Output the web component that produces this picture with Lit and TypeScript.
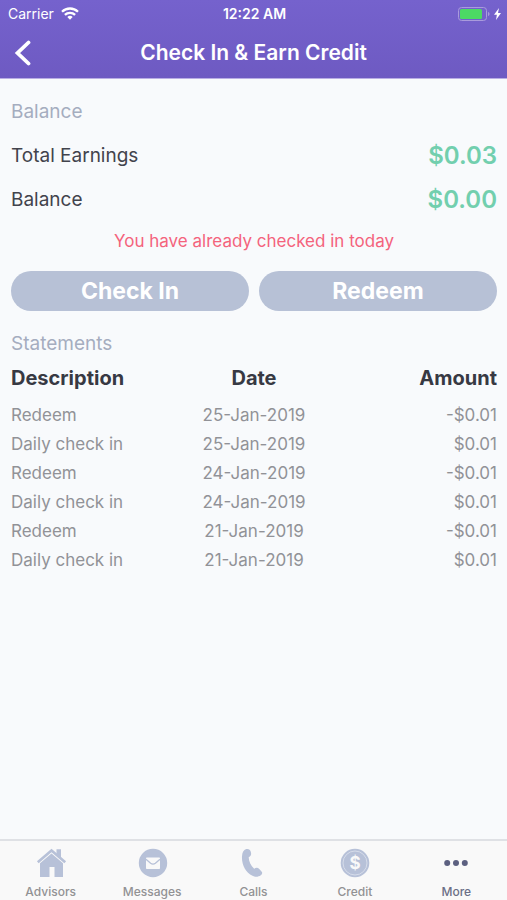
import { LitElement, html, css, svg } from "lit";
import { customElement, property } from "lit/decorators.js";

interface Statement {
  description: string;
  date: string;
  amount: string;
}

const STATEMENTS: Statement[] = [
  { description: "Redeem", date: "25-Jan-2019", amount: "-$0.01" },
  { description: "Daily check in", date: "25-Jan-2019", amount: "$0.01" },
  { description: "Redeem", date: "24-Jan-2019", amount: "-$0.01" },
  { description: "Daily check in", date: "24-Jan-2019", amount: "$0.01" },
  { description: "Redeem", date: "21-Jan-2019", amount: "-$0.01" },
  { description: "Daily check in", date: "21-Jan-2019", amount: "$0.01" },
];

const TABS = [
  {
    label: "Advisors",
    icon: svg`
      <path fill="currentColor" d="M20.500 1.200H25v9.200l-4.500-4z"/>
      <path fill="none" stroke="currentColor" stroke-width="2.600" d="M1.800 14.200 15.500 2.400l13.700 11.800"/>
      <path fill="currentColor" d="M15.500 5.400 27 15.200V29h-8.500V19h-5v10H4V15.200z"/>`,
  },
  {
    label: "Messages",
    icon: svg`
      <circle cx="16" cy="15" r="14.200" fill="currentColor"/>
      <rect x="9" y="9.500" width="14" height="11.500" rx="0.800" fill="#f9f9f9"/>
      <path fill="none" stroke="currentColor" stroke-width="1.300" d="m9 11.300 4.600 4q2.400 1.800 4.800 0l4.600-4"/>`,
  },
  {
    label: "Calls",
    icon: svg`
      <path fill="currentColor" d="M8.200 1.100c2.300-.6 3.900.3 4.500 2.400.9 2.600.5 4.700-2 5.700.2 4.400 2.100 8.300 5.500 11.500 1.800-1.300 3.700-1.100 5.300.6l2 2.100c1.200 1.400.8 2.700-.7 3.800-2.300 1.700-5.500 2-8.300.6C7.500 24.300 3.500 16.500 4 8.300 4.300 4.500 5.500 1.900 8.200 1.100z"/>`,
  },
  {
    label: "Credit",
    icon: svg`
      <circle cx="15" cy="15" r="14.300" fill="currentColor"/>
      <circle cx="15" cy="15" r="12" fill="none" stroke="#dde2ee" stroke-width="0.800"/>
      <text x="15" y="21" text-anchor="middle" font-size="17" font-weight="700" fill="#f9f9f9">$</text>`,
  },
  {
    label: "More",
    icon: svg`
      <g fill="currentColor">
        <circle cx="6.200" cy="15" r="3"/>
        <circle cx="15" cy="15" r="3"/>
        <circle cx="23.800" cy="15" r="3"/>
      </g>`,
  },
];

@customElement("status-bar")
export class StatusBar extends LitElement {
  static styles = css`
    :host {
      display: grid;
      grid-template-columns: 1fr auto 1fr;
      align-items: center;
      height: 27px;
      padding: 0 6px 0 8px;
      font-size: 14px;
    }
    .side {
      display: flex;
      align-items: center;
      gap: 7px;
    }
    .end {
      justify-content: flex-end;
      gap: 4px;
    }
    .time {
      font-weight: 600;
    }
    svg {
      display: block;
    }
  `;

  render() {
    return html`
      <div class="side">
        <span>Carrier</span>
        <svg width="18" height="13" viewBox="0 0 18 13" role="img" aria-label="Wi-Fi">
          <g fill="none" stroke="#fff" stroke-width="2.300">
            <path d="M1 4.800a11.400 11.400 0 0 1 16 0" />
            <path d="M3.900 7.900a7.200 7.200 0 0 1 10.200 0" />
          </g>
          <path fill="#fff" d="M6.300 10a3.900 3.900 0 0 1 5.400 0L9 12.800z" />
        </svg>
      </div>
      <span class="time">12:22 AM</span>
      <div class="side end">
        <svg width="32" height="14" viewBox="0 0 32 14" role="img" aria-label="Battery">
          <rect x="0.500" y="0.500" width="28" height="13" rx="3" fill="none" stroke="#a99bdc" />
          <rect x="2" y="2" width="22" height="10" rx="1.500" fill="#4cd964" />
          <path d="M30 5c2 .6 2 3.400 0 4z" fill="#a99bdc" />
        </svg>
        <svg width="7" height="12" viewBox="0 0 7 12" role="img" aria-label="Charging">
          <path fill="#fff" d="M5 0 0 6.800h2.900L2 12l5-7H4z" />
        </svg>
      </div>
    `;
  }
}

@customElement("tab-bar")
export class TabBar extends LitElement {
  @property() active = "More";

  static styles = css`
    :host {
      display: block;
      border-top: 2px solid #dfe1e5;
      background: #f9f9f9;
    }
    nav {
      display: grid;
      grid-template-columns: repeat(5, 1fr);
    }
    a {
      display: flex;
      flex-direction: column;
      align-items: center;
      gap: 6px;
      padding: 7px 0 0;
      color: #929294;
      font-size: 12px;
      font-weight: 500;
      line-height: 16px;
      text-decoration: none;
    }
    svg {
      display: block;
      color: #b7c1d8;
    }
    .active {
      color: #6b6f86;
    }
    .active svg {
      color: #5c6080;
    }
  `;

  render() {
    return html`
      <nav>
        ${TABS.map(
          (tab) => html`
            <a href="#${tab.label.toLowerCase()}" class=${tab.label === this.active ? "active" : ""}>
              <svg width="30" height="30" viewBox="0 0 30 30" overflow="visible" aria-hidden="true">${tab.icon}</svg>
              <span>${tab.label}</span>
            </a>
          `
        )}
      </nav>
    `;
  }
}

@customElement("app-root")
export class AppRoot extends LitElement {
  static styles = css`
    :host {
      display: flex;
      flex-direction: column;
      min-height: 100vh;
      background: #f8fafc;
      color: #42434c;
      font-family: Inter, "Liberation Sans", sans-serif;
    }
    header {
      background: linear-gradient(#7562cd, #6e5ac2);
      border-bottom: 1px solid #b9aee4;
      color: #fff;
    }
    .bar {
      display: grid;
      grid-template-columns: 48px 1fr 48px;
      align-items: center;
      height: 51px;
    }
    .back {
      display: flex;
      align-items: center;
      height: 40px;
      padding: 0 0 0 13px;
      border: 0;
      background: none;
      color: inherit;
    }
    h1 {
      margin: 0;
      font-size: 21px;
      font-weight: 600;
      line-height: 28px;
      text-align: center;
    }
    main {
      flex: 1;
      padding: 21px 10px 0 11px;
    }
    h2 {
      margin: 0;
      color: #a5adbf;
      font-size: 19px;
      font-weight: 400;
      line-height: 24px;
    }
    dl {
      margin: 9px 0 0;
    }
    .total {
      display: flex;
      align-items: center;
      justify-content: space-between;
      height: 44px;
    }
    dt {
      font-size: 19px;
    }
    dd {
      margin: 0;
      color: #72cfae;
      font-size: 24px;
      font-weight: 600;
    }
    .notice {
      margin: 8px 0 18px;
      color: #f4637c;
      font-size: 17px;
      line-height: 24px;
      text-align: center;
    }
    .actions {
      display: grid;
      grid-template-columns: 1fr 1fr;
      gap: 10px;
      margin-bottom: 21px;
    }
    .actions button {
      height: 40px;
      padding: 0;
      border: 0;
      border-radius: 20px;
      background: #b7c1d6;
      color: #fff;
      font: 700 23px Inter, "Liberation Sans", sans-serif;
    }
    table {
      width: 100%;
      border-collapse: collapse;
      table-layout: fixed;
      color: #919297;
      font-size: 17px;
    }
    th,
    td {
      padding: 0;
      text-align: center;
    }
    th {
      height: 44px;
      color: #373943;
      font-size: 20px;
      font-weight: 700;
    }
    td {
      height: 29px;
    }
    th:first-child,
    td:first-child {
      text-align: left;
    }
    th:last-child,
    td:last-child {
      text-align: right;
    }
  `;

  render() {
    return html`
      <header>
        <status-bar></status-bar>
        <div class="bar">
          <button class="back" aria-label="Back">
            <svg width="18" height="26" viewBox="0 0 18 26" aria-hidden="true">
              <path d="M15.500 2.500 4.500 13l11 10.500" fill="none" stroke="#fff" stroke-width="3.800" stroke-linecap="round" />
            </svg>
          </button>
          <h1>Check In &amp; Earn Credit</h1>
        </div>
      </header>
      <main>
        <h2>Balance</h2>
        <dl>
          <div class="total"><dt>Total Earnings</dt><dd>$0.03</dd></div>
          <div class="total"><dt>Balance</dt><dd>$0.00</dd></div>
        </dl>
        <p class="notice">You have already checked in today</p>
        <div class="actions">
          <button>Check In</button>
          <button>Redeem</button>
        </div>
        <h2>Statements</h2>
        <table>
          <thead>
            <tr><th scope="col">Description</th><th scope="col">Date</th><th scope="col">Amount</th></tr>
          </thead>
          <tbody>
            ${STATEMENTS.map(
              (s) => html`<tr><td>${s.description}</td><td>${s.date}</td><td>${s.amount}</td></tr>`
            )}
          </tbody>
        </table>
      </main>
      <tab-bar active="More"></tab-bar>
    `;
  }
}
